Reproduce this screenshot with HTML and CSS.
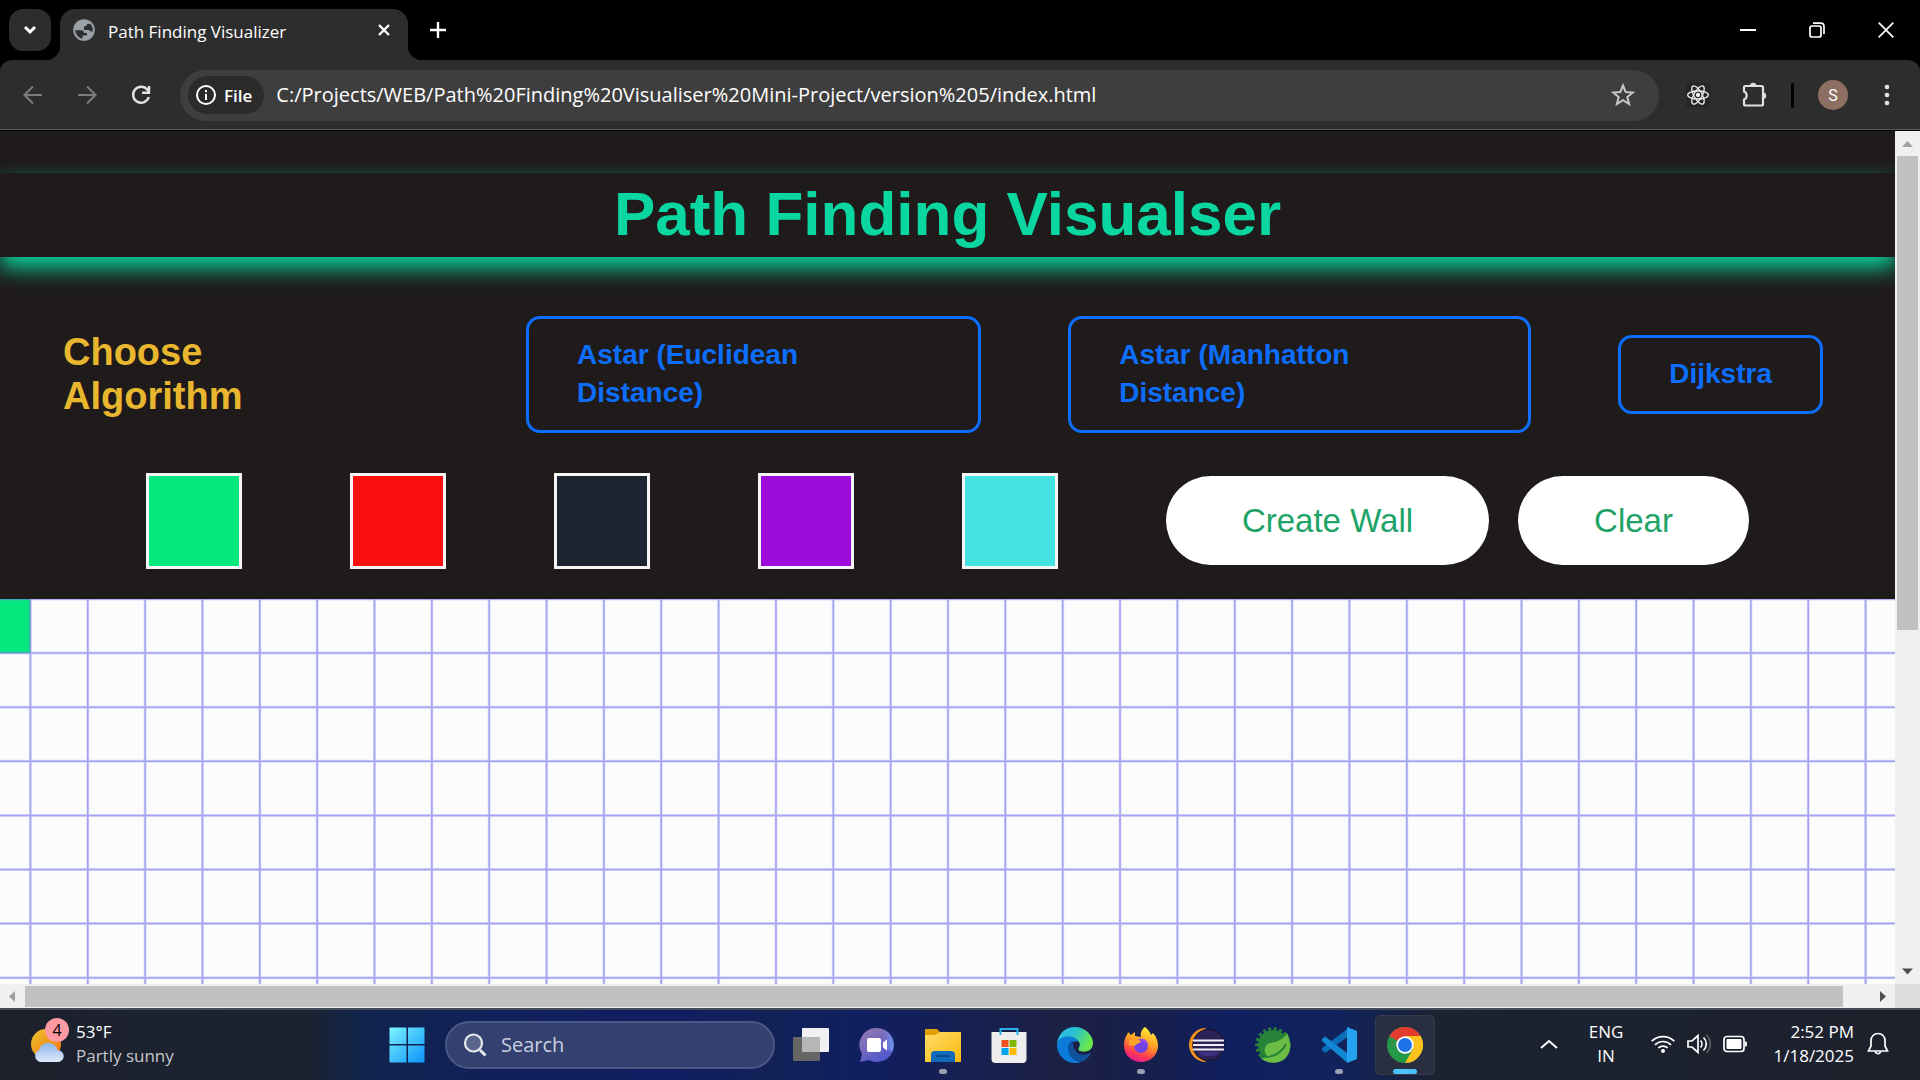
FILE: index.html
```html
<!DOCTYPE html>
<html lang="en">
<head>
<meta charset="utf-8">
<title>Path Finding Visualizer</title>
<link rel="stylesheet" href="styles.css">
</head>
<body>
<header class="titlebar">
  <button class="tab-search" aria-label="Search tabs"><svg width="14" height="10" viewBox="0 0 14 10"><path d="M2 2l5 5 5-5" fill="none" stroke="#fff" stroke-width="3"/></svg></button>
  <div class="tab">
    <svg class="favicon" width="22" height="22" viewBox="0 0 22 22"><circle cx="11" cy="11" r="9.8" fill="#2d2d2d" stroke="#9aa0a8" stroke-width="2"/><path d="M10 1.500C5 2 1.500 6 1.500 11c2 0 4 .3 6 .3 2.500 0 3.500 1 3.500 2.700h3v2.500H9.500v3.800c5 1 10-2.500 11-8-2 .5-3.500.2-4.500-1.300h-5V7.500c2.500 0 3-1 3-2.500h3.500C15.500 2.500 13 1.300 10 1.500z" fill="#9aa0a8"/></svg>
    <span class="tab-title">Path Finding Visualizer</span>
    <button class="plain" aria-label="Close tab"><svg width="14" height="14" viewBox="0 0 14 14"><path d="M2 2l10 10M12 2L2 12" stroke="#fff" stroke-width="2.400"/></svg></button>
  </div>
  <button class="plain new-tab" aria-label="New tab"><svg width="16" height="16" viewBox="0 0 16 16"><path d="M8 0v16M0 8h16" stroke="#fff" stroke-width="2.400"/></svg></button>
  <div class="window-controls">
    <button class="plain" aria-label="Minimize"><svg width="16" height="16" viewBox="0 0 16 16"><path d="M0 8h16" stroke="#fff" stroke-width="2"/></svg></button>
    <button class="plain" aria-label="Restore"><svg width="16" height="16" viewBox="0 0 16 16" fill="none" stroke="#fff" stroke-width="1.700"><rect x="1" y="4" width="11" height="11" rx="2"/><path d="M4 1.200h7.500q3.500 0 3.500 3.500V12"/></svg></button>
    <button class="plain" aria-label="Close"><svg width="16" height="16" viewBox="0 0 16 16"><path d="M.7.7l14.600 14.600M15.300.7L.7 15.300" stroke="#fff" stroke-width="1.700"/></svg></button>
  </div>
</header>
<nav class="toolbar">
  <div class="nav-buttons">
    <button class="plain" aria-label="Back"><svg width="20" height="20" viewBox="0 0 20 20" fill="none" stroke="#7d7d7d" stroke-width="2"><path d="M19 10H2M10 1.500L1.500 10l8.500 8.500"/></svg></button>
    <button class="plain" aria-label="Forward"><svg width="20" height="20" viewBox="0 0 20 20" fill="none" stroke="#7d7d7d" stroke-width="2"><path d="M1 10h17M10 1.500l8.500 8.500-8.500 8.500"/></svg></button>
    <button class="plain" aria-label="Reload"><svg width="20" height="20" viewBox="0 0 20 20" fill="none" stroke="#e3e3e3" stroke-width="2.400"><path d="M17.800 12a8 8 0 1 1-1.600-7.500L18 7"/><path d="M18 1v6.800h-7"/></svg></button>
  </div>
  <div class="omnibox">
    <button class="chip"><svg width="20" height="20" viewBox="0 0 20 20"><circle cx="10" cy="10" r="9" fill="none" stroke="#fff" stroke-width="2"/><path d="M10 9v6M10 5v2.300" stroke="#fff" stroke-width="2"/></svg>File</button>
    <input class="url" aria-label="Address" value="C:/Projects/WEB/Path%20Finding%20Visualiser%20Mini-Project/version%205/index.html">
    <button class="plain" aria-label="Bookmark"><svg width="24" height="24" viewBox="0 0 24 24"><path d="M12 2.500l2.700 6.600 7 .5-5.400 4.500 1.800 6.900-6.100-3.800L5.900 21l1.800-6.900L2.300 9.600l7-.5z" fill="none" stroke="#c7c7c7" stroke-width="2"/></svg></button>
  </div>
  <div class="tools">
    <button class="plain react" aria-label="React tools"><svg width="24" height="24" viewBox="0 0 24 24" fill="none" stroke="#eee" stroke-width="1.300"><ellipse cx="12" cy="12" rx="10.300" ry="4"/><ellipse cx="12" cy="12" rx="10.300" ry="4" transform="rotate(60 12 12)"/><ellipse cx="12" cy="12" rx="10.300" ry="4" transform="rotate(120 12 12)"/><circle cx="12" cy="12" r="1.500" fill="#fff"/></svg></button>
    <button class="plain" aria-label="Extensions"><svg width="26" height="26" viewBox="0 0 26 26"><path d="M3 5.500q0-1.500 1.500-1.500h16Q22 4 22 5.500V22q0 1.500-1.500 1.500h-16Q3 23.500 3 22v-4.500c3.500-1 3.500-7 0-8z" fill="none" stroke="#e0e0e0" stroke-width="2.200"/><path d="M9 4a3.200 3.200 0 0 1 6.400 0zM22 10.500a3.200 3.200 0 0 1 0 6.400z" fill="#e0e0e0"/></svg></button>
    <span class="divider"></span>
    <button class="avatar">S</button>
    <button class="plain menu" aria-label="Menu"><svg width="6" height="24" viewBox="0 0 6 24" fill="#e3e3e3"><circle cx="3" cy="4" r="2.300"/><circle cx="3" cy="12" r="2.300"/><circle cx="3" cy="20" r="2.300"/></svg></button>
  </div>
</nav>
<div class="viewport">
  <main class="page">
    <h1 class="heading">Path Finding Visualser</h1>
    <section class="algorithms">
      <h2 class="choose">Choose<br>Algorithm</h2>
      <button class="algo">Astar (Euclidean<br>Distance)</button>
      <button class="algo">Astar (Manhatton<br>Distance)</button>
      <button class="algo">Dijkstra</button>
    </section>
    <section class="controls">
      <span class="swatch start"></span>
      <span class="swatch end"></span>
      <span class="swatch wall"></span>
      <span class="swatch visited"></span>
      <span class="swatch path"></span>
      <div class="actions">
        <button class="pill">Create Wall</button>
        <button class="pill">Clear</button>
      </div>
    </section>
    <div class="board"><canvas class="grid" id="grid"></canvas></div>
  </main>
  <div class="scroll-y">
    <svg class="arrow" viewBox="0 0 25 25"><path d="M7 16l5.500-6 5.500 6z" fill="#a0a0a0"/></svg>
    <div class="track-y"><div class="thumb-y"></div></div>
    <svg class="arrow" viewBox="0 0 25 25"><path d="M7 9.500h11l-5.500 6z" fill="#505050"/></svg>
  </div>
  <div class="scroll-x">
    <svg class="arrow" viewBox="0 0 25 25"><path d="M15 7v11l-6-5.500z" fill="#a0a0a0"/></svg>
    <div class="track-x"><div class="thumb-x"></div></div>
    <svg class="arrow" viewBox="0 0 25 25"><path d="M10 7v11l6-5.500z" fill="#505050"/></svg>
  </div>
  <div class="corner"></div>
</div>
<footer class="taskbar">
  <div class="weather">
    <div class="weather-icon">
      <svg width="36" height="38" viewBox="0 0 36 38"><defs><linearGradient id="sun" x1="0" y1="0" x2="1" y2="1"><stop offset="0" stop-color="#f0c32f"/><stop offset="1" stop-color="#f0700c"/></linearGradient><linearGradient id="cloud" x1="0" y1="0" x2="0" y2="1"><stop offset="0" stop-color="#8ab4ee"/><stop offset="1" stop-color="#dfe9fb"/></linearGradient></defs><circle cx="16" cy="16" r="15" fill="url(#sun)"/><path d="M10 34a7 6.500 0 0 1-1-12 9.500 9.500 0 0 1 18.500 0A6.500 6 0 0 1 27 34z" fill="url(#cloud)"/></svg>
      <span class="count">4</span>
    </div>
    <div class="weather-text"><div>53°F</div><div class="muted">Partly sunny</div></div>
  </div>
  <div class="apps">
    <button class="app start-button" aria-label="Start"><svg width="36" height="36" viewBox="0 0 36 36"><defs><linearGradient id="win" x1="0" y1="0" x2="1" y2="1"><stop offset="0" stop-color="#7df4ff"/><stop offset="1" stop-color="#0a93fb"/></linearGradient></defs><path d="M1 .5h16.500v16.500H.5V1zM19 .5h16.500v16.500H19zM.5 18.500h17v17H.5zM19 18.500h16.500v17H19z" fill="url(#win)"/></svg></button>
    <label class="search"><svg width="24" height="24" viewBox="0 0 24 24" fill="none" stroke="#e8eaf0"><circle cx="10.500" cy="10" r="8.500" stroke-width="2.200" fill="#5a668c"/><path d="M17 17l5.500 5.500" stroke-width="3"/></svg><input class="search-input" type="text" placeholder="Search" aria-label="Search"></label>
    <button class="app" aria-label="Task view"><svg width="36" height="36" viewBox="0 0 36 36"><rect y="10" width="27" height="24" rx="1" fill="#666"/><rect x="9" y="1" width="27" height="24" rx="1" fill="#f1f1f3"/><rect x="9" y="10" width="18" height="15" fill="#b6b6b8"/></svg></button>
    <button class="app" aria-label="Chat"><svg width="36" height="36" viewBox="0 0 36 36"><defs><linearGradient id="chat" x1="0" y1="0" x2=".6" y2="1"><stop offset="0" stop-color="#9b7caf"/><stop offset="1" stop-color="#5058cd"/></linearGradient><linearGradient id="chat2"><stop offset=".4" stop-color="#6f8ee8" stop-opacity="0"/><stop offset="1" stop-color="#7098ee"/></linearGradient></defs><path d="M18 1a17 17 0 1 1-8 32L1 35l2-8A17 17 0 0 1 18 1z" fill="url(#chat)"/><path d="M18 1a17 17 0 0 1 15 24L18 18z" fill="url(#chat2)"/><rect x="8" y="11" width="14" height="14" rx="2" fill="#fff"/><path d="M24 15.500l4-3v11l-4-3z" fill="#fff"/></svg></button>
    <button class="app running" aria-label="File Explorer"><svg width="36" height="36" viewBox="0 0 36 36"><defs><linearGradient id="fold" x1="0" y1="0" x2="1" y2="1"><stop offset="0" stop-color="#ffdc6b"/><stop offset="1" stop-color="#fcb80c"/></linearGradient></defs><path d="M0 2h12l3 3v4H0z" fill="#e0a000"/><path d="M0 8h10l5-3h21v30H0z" fill="url(#fold)"/><path d="M6 35V28q0-4 4-4h16q4 0 4 4v7z" fill="#0f6cbd"/><path d="M11 29h14" stroke="#0a4a8c" stroke-width="2"/></svg></button>
    <button class="app" aria-label="Microsoft Store"><svg width="36" height="36" viewBox="0 0 36 36"><path d="M.5 5h35v27q0 4-4 4h-27q-4 0-4-4z" fill="#eee"/><path d="M9.500 8V2h17v6" fill="none" stroke="#28b0ec" stroke-width="2"/><path d="M10.500 13h7v7h-7z" fill="#f25022"/><path d="M18.500 13h7v7h-7z" fill="#7fba00"/><path d="M10.500 21h7v7h-7z" fill="#00a4ef"/><path d="M18.500 21h7v7h-7z" fill="#ffb900"/></svg></button>
    <button class="app" aria-label="Edge"><svg width="36" height="36" viewBox="0 0 36 36"><defs><linearGradient id="ed" x1="0" y1="0" x2="1" y2=".4"><stop offset="0" stop-color="#35b8f0"/><stop offset=".5" stop-color="#27c1cf"/><stop offset="1" stop-color="#69e84d"/></linearGradient></defs><path d="M0 17C1 7 8 0 18 0s18 8 18 16c0 6-4 8.500-9 8.500-5 0-6.500-1.500-5-4 3-5-2-9-8-9-6 0-11 2-14 5.500z" fill="url(#ed)"/><path d="M0 18C0 13 5 9.500 11 9.500c5 0 9 2 10.500 5-5-1-9.500 2-9.500 7 0 8 5 13 12 13.500-2 1-4 1-6 1A18 18 0 0 1 0 18z" fill="#0a7bd8"/><path d="M11 20c0-3 2-5.500 5-6.500-1 7 3 14 10 14 3 0 5-.5 7-1.500.8 0 1 .4.500 1C31 31.500 27 35 22 35c-7-2-11-8-11-15z" fill="#10519e"/></svg></button>
    <button class="app running" aria-label="Firefox"><svg width="36" height="36" viewBox="0 0 36 36"><defs><linearGradient id="ff" x1=".7" y1="0" x2=".3" y2="1"><stop offset="0" stop-color="#fff13c"/><stop offset=".45" stop-color="#ff9a24"/><stop offset=".75" stop-color="#ff3f4d"/><stop offset="1" stop-color="#e0119d"/></linearGradient></defs><path d="M22 0c3 2 5 5 6 8l2-2c3 3 5 8 5 12.500C35 28 27.500 35 18 35S1 28 1 18.500C1 14 2 10 4 8l1-3 3 3 4-3 0 4 6 1c-1-4 1-8 4-10z" fill="url(#ff)"/><circle cx="18" cy="19" r="7" fill="#7542e5"/><path d="M6 13c4-1 8-1 12 1-1 3-5 2-6 5l-6-1z" fill="#ffa326"/><path d="M17 12c4-1 8 2 8 6-2-3-5-3-8-6z" fill="#a24bf0"/></svg></button>
    <button class="app" aria-label="Eclipse"><svg width="36" height="36" viewBox="0 0 36 36"><path d="M17 1a17 17 0 0 0 0 34A25 25 0 0 1 17 1z" fill="#f7941e"/><circle cx="19.500" cy="18" r="15.800" fill="#2c2255" stroke="#15122b"/><path d="M8 25h23a13 8 0 0 1-23 0z" fill="#3e3280"/><path d="M4 13.500h31M4 18h31M4 22.500h31" stroke="#f1eefa" stroke-width="2.200"/></svg></button>
    <button class="app" aria-label="Spring Tools"><svg width="36" height="36" viewBox="0 0 36 36"><circle cx="18" cy="18" r="15" fill="#268338"/><circle cx="18" cy="18" r="16.300" fill="none" stroke="#268338" stroke-width="3" stroke-dasharray="3 2.500"/><path d="M32 6c5 10 5 25-8 29-9 2-16-1-19-5 3 1 6 1 9 0-6-3-6-12 1-14 7-1 13-3 17-10z" fill="#6cbd45"/><path d="M5 30c13 1 21-3 26-13" fill="none" stroke="#268338" stroke-width="2"/></svg></button>
    <button class="app running" aria-label="Visual Studio Code"><svg width="36" height="36" viewBox="0 0 36 36"><path d="M1 23l3 3L28 9V.5L1 21z" fill="#0b6cb8"/><path d="M26 0l10 4v28l-10 4z" fill="#25a3f1"/><path d="M1 12l3-2.500L26 26v9.500L1 14z" fill="#1287d4"/></svg></button>
    <button class="app active" aria-label="Chrome"><svg width="36" height="36" viewBox="0 0 36 36"><circle cx="18" cy="18" r="18" fill="#249947"/><path d="M2.400 9A18 18 0 0 1 33.600 9L18 18z" fill="#e33b2e"/><path d="M18 9h15.600A18 18 0 0 1 18 36l8-14z" fill="#fcc21b"/><path d="M2.400 9L10 22l8-13z" fill="#e33b2e"/><path d="M2.400 9l8 13.500L18 18z" fill="#249947"/><circle cx="18" cy="18" r="8.700" fill="#fff"/><circle cx="18" cy="18" r="7" fill="#1f73e8"/></svg></button>
  </div>
  <div class="tray">
    <svg class="chevron" width="18" height="12" viewBox="0 0 18 12"><path d="M1 10l8-7 8 7" fill="none" stroke="#fff" stroke-width="2"/></svg>
    <div class="language"><div>ENG</div><div>IN</div></div>
    <div class="status">
      <svg width="24" height="20" viewBox="0 0 24 20" fill="none" stroke="#fff" stroke-width="1.700"><path d="M.7 7.200a16 16 0 0 1 22.600 0M4 10.800a11.300 11.300 0 0 1 16 0M7.300 14a6.700 6.700 0 0 1 9.400 0"/><circle cx="12" cy="17" r="2" fill="#fff" stroke="none"/></svg>
      <svg width="24" height="20" viewBox="0 0 24 20" fill="none" stroke="#fff" stroke-width="1.700"><path d="M1 7h4l6-5.500v17L5 13H1z"/><path d="M13.500 6.500a5 5 0 0 1 0 7M16.500 3.500a9 9 0 0 1 0 13"/><path d="M19.500 1a12.500 12.500 0 0 1 0 18" stroke="#5c6069"/></svg>
      <svg width="24" height="20" viewBox="0 0 24 20"><rect x="1" y="2.500" width="20" height="15" rx="3" fill="none" stroke="#fff" stroke-width="1.700"/><rect x="3.500" y="5" width="15" height="10" rx="1" fill="#fff"/><path d="M22 7.500h1.500q1 2.500 0 5H22z" fill="#fff"/></svg>
    </div>
    <div class="clock"><div>2:52 PM</div><div>1/18/2025</div></div>
    <svg class="bell" width="22" height="24" viewBox="0 0 22 24" fill="none" stroke="#fff" stroke-width="1.700"><path d="M11 1.500c-4 0-7 3-7 7V14l-2.500 5h19L18 14V8.500c0-4-3-7-7-7z"/><path d="M8 19.500q3 4.500 6 0"/></svg>
  </div>
</footer>
<script src="script.js"></script>
</body>
</html>
```
FILE: styles.css
```css
* { box-sizing: border-box; }
body {
  margin: 0;
  min-height: 100vh;
  display: flex;
  flex-direction: column;
  background: #000;
  color: #fff;
  font-family: "Open Sans", "Noto Sans", sans-serif;
}
button, input { font: inherit; color: inherit; border: 0; padding: 0; background: none; }
svg { display: block; flex: none; }
.plain { display: grid; place-items: center; }

/* Window title bar */
.titlebar { display: flex; align-items: center; height: 60px; padding: 0 0 0 9px; }
.tab-search { width: 42px; height: 42px; border-radius: 14px; background: #2d2d2d; display: grid; place-items: center; }
.tab {
  position: relative;
  align-self: flex-end;
  display: flex;
  align-items: center;
  width: 348px;
  height: 51px;
  margin-left: 9px;
  padding: 0 17px 9px 13px;
  border-radius: 15px 15px 0 0;
  background: #2d2d2d;
}
.tab::before, .tab::after { content: ""; position: absolute; bottom: 0; width: 15px; height: 15px; }
.tab::before { right: 100%; background: radial-gradient(circle at 0 0, transparent 15px, #2d2d2d 16px); }
.tab::after { left: 100%; background: radial-gradient(circle at 100% 0, transparent 15px, #2d2d2d 16px); }
.tab-title { margin-left: 13px; margin-right: auto; padding-top: 3px; font-size: 17px; line-height: 24px; }
.new-tab { margin-left: 22px; }
.window-controls { display: flex; align-self: stretch; margin-left: auto; }
.window-controls .plain { width: 69px; }

/* Toolbar */
.toolbar {
  display: flex;
  align-items: center;
  height: 71px;
  border-radius: 12px 12px 0 0;
  background: #2d2d2d;
  border-bottom: 1px solid #000;
  box-shadow: inset 0 -1px #5a5a5a;
}
.nav-buttons { display: flex; gap: 34px; width: 180px; padding-left: 23px; }
.omnibox { flex: 1; display: flex; align-items: center; height: 51px; padding: 0 24px 0 8px; border-radius: 26px; background: #3e3e3e; }
.chip { display: flex; align-items: center; gap: 8px; height: 38px; padding: 0 12px 0 8px; border-radius: 19px; background: #2b2b2b; font-size: 17px; font-weight: 600; }
.url { flex: 1; min-width: 0; margin-left: 12px; padding-bottom: 2px; font-size: 20px; }
.tools { display: flex; align-items: center; padding: 0 30px 0 27px; }
.react { background: #262626; }
.tools .plain + .plain { margin-left: 31px; }
.divider { width: 3px; height: 25px; margin-left: 24px; border-radius: 2px; background: #000; }
.avatar { width: 30px; height: 30px; margin-left: 24px; border-radius: 50%; background: #8d6e63; font: 16px Roboto, sans-serif; }
.menu { margin-left: 36px; }

/* Page area with its scroll bars */
.viewport { flex: 1; display: grid; grid-template: 1fr 24px / 1fr 25px; }
.page { display: flex; flex-direction: column; min-width: 0; overflow: hidden; background: #1f1b1a; font-family: "Liberation Sans", Arial, sans-serif; }
.heading {
  margin: 42px 0 0;
  padding-bottom: 2px;
  background: #1f1b1a;
  box-shadow: 0 11px 20px #0acf9b;
  color: #0ad6a2;
  font-size: 62px;
  line-height: 82px;
  text-align: center;
}
.algorithms {
  display: grid;
  grid-template-columns: 376fr 455fr 463fr auto;
  align-items: center;
  column-gap: 87px;
  margin-top: 59px;
  padding: 0 72px 0 63px;
}
.choose { margin: 0; padding-bottom: 2px; color: #e9b72f; font-size: 38px; line-height: 44px; }
.algo {
  padding: 17px 48px 18px;
  border: 3px solid #0d6efd;
  border-radius: 14px;
  color: #0d6efd;
  font-size: 28px;
  font-weight: 700;
  line-height: 38px;
  text-align: left;
}
.controls { display: flex; align-items: center; justify-content: space-between; margin-top: 40px; padding: 0 146px; }
.swatch { width: 96px; height: 96px; border: 3px solid #f5f5f5; }
.start { background: #05e87d; }
.end { background: #fb1010; }
.wall { background: #1d2431; }
.visited { background: #9c0bd9; }
.path { background: #44e2e0; }
.actions { display: flex; gap: 29px; padding-bottom: 1px; }
.pill { height: 89px; padding: 0 76px; border-radius: 45px; background: #fff; color: #20a367; font-size: 33px; }
.board { flex: 1; min-height: 0; margin-top: 30px; display: flex; overflow: hidden; background: #fcfcfd; }
.grid { display: block; width: 100%; height: 100%; }

.scroll-y { display: flex; flex-direction: column; background: #f0f0f0; }
.scroll-x { display: flex; background: #f0f0f0; }
.arrow { width: 25px; height: 25px; }
.track-y { flex: 1; padding: 0 2px; }
.thumb-y { height: 59%; background: #c1c1c1; }
.track-x { flex: 1; display: flex; padding: 2px 27px 1px 0; }
.thumb-x { flex: 1; background: #c1c1c1; }
.corner { background: #dcdcdc; }

/* Taskbar */
.taskbar {
  display: flex;
  height: 72px;
  border-top: 2px solid #444c57;
  background: linear-gradient(90deg, #1d212c 0, #1b2331 16%, #11244e 19%, #10205c 27%, #101d62 35%, #122257 40%, #101f60 45%, #1b2044 55%, #171f4c 60%, #101f60 64%, #11235a 70%, #1b2230 75%, #1d212c 100%);
  font-size: 17px;
  line-height: 24px;
}
.weather { display: flex; align-items: center; width: 377px; padding: 0 0 2px 30px; }
.weather-icon { position: relative; width: 46px; padding-top: 6px; }
.count { position: absolute; top: -4px; left: 15px; width: 24px; height: 24px; border-radius: 50%; background: #ff99a4; color: #000; font-size: 16px; text-align: center; }
.muted { color: #c4c7cc; }
.apps { display: flex; align-items: center; padding-bottom: 1px; }
.app { position: relative; display: grid; place-items: center; width: 60px; height: 60px; margin: 0 3px; border-radius: 6px; }
.start-button { margin: 0 8px 0 0; }
.search { display: flex; align-items: center; gap: 14px; width: 330px; height: 48px; margin-right: 3px; padding: 0 16px; border: 2px solid #4b5785; border-radius: 24px; background: #34406f; }
.search-input { min-width: 0; flex: 1; font-size: 20px; }
.search-input::placeholder { color: #cbd0de; opacity: 1; }
.running::after, .active::after { content: ""; position: absolute; bottom: 1px; left: 26px; width: 8px; height: 5px; border-radius: 3px; background: #9a9fb3; }
.active { background: #292f40; box-shadow: inset 0 0 0 1px #363b4b; }
.active::after { left: 18px; width: 24px; background: #4cc2ff; }
.tray { flex: 1; display: flex; align-items: center; justify-content: flex-end; padding: 0 31px 2px 0; }
.language { width: 40px; margin-left: 28px; text-align: center; }
.status { display: flex; gap: 12px; margin-left: 25px; }
.clock { width: 107px; text-align: right; }
.bell { margin-left: 13px; }
```
FILE: script.js
```js
const CELL_W = 57.35;
const CELL_H = 54.1;
const FIRST_X = 30.4;

function drawGrid() {
  const canvas = document.getElementById("grid");
  const w = canvas.width = canvas.parentElement.clientWidth;
  const h = canvas.height = canvas.parentElement.clientHeight;
  const ctx = canvas.getContext("2d");
  ctx.fillStyle = "#05e87d";
  ctx.fillRect(0, 0, FIRST_X, CELL_H);
  ctx.beginPath();
  for (let x = FIRST_X; x < w; x += CELL_W) {
    ctx.moveTo(x, 0);
    ctx.lineTo(x, h);
  }
  for (let y = 0; y < h; y += CELL_H) {
    ctx.moveTo(0, y);
    ctx.lineTo(w, y);
  }
  ctx.strokeStyle = "rgba(120, 120, 240, 0.25)";
  ctx.lineWidth = 3;
  ctx.stroke();
  ctx.strokeStyle = "rgba(110, 110, 235, 0.5)";
  ctx.lineWidth = 1.5;
  ctx.stroke();
}

drawGrid();
window.addEventListener("resize", drawGrid);
```
